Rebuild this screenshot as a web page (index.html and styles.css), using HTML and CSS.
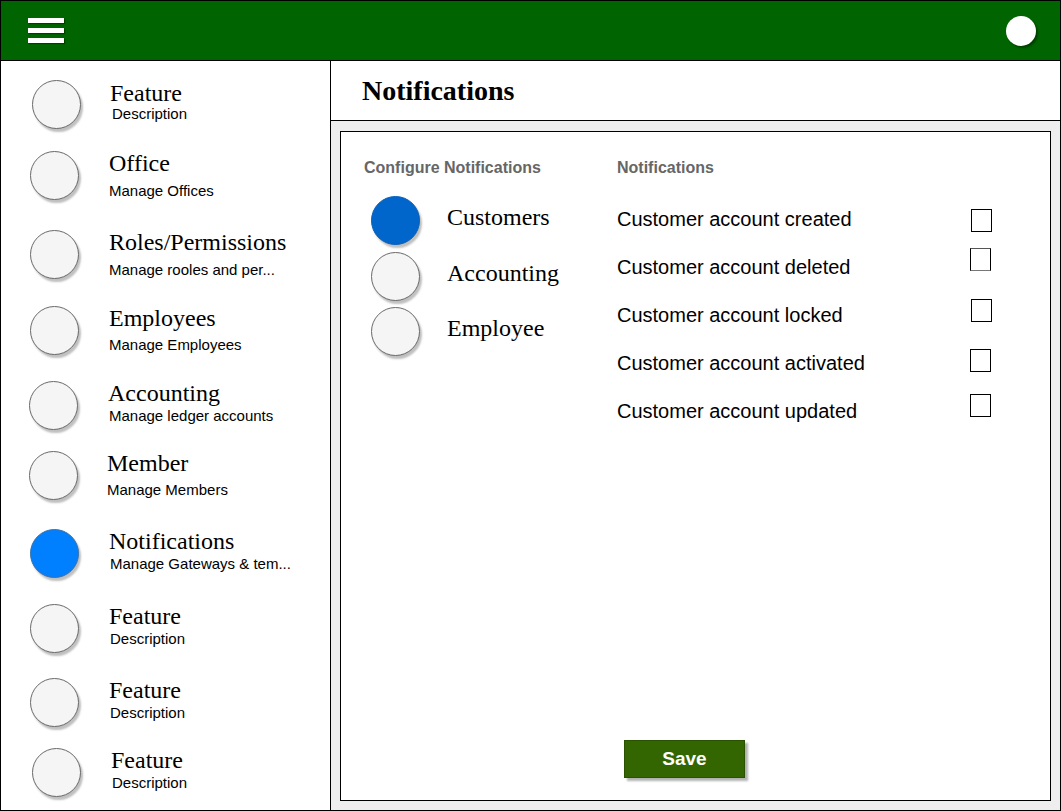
FILE: index.html
```html
<!DOCTYPE html>
<html lang="en">
<head>
<meta charset="utf-8">
<title>Notifications</title>
<link rel="stylesheet" href="styles.css">
</head>
<body>
<div class="app">
  <header class="topbar">
    <div class="hamburger"><span></span><span></span><span></span></div>
    <div class="avatar"></div>
  </header>
  <div class="body">
    <nav class="sidebar">
      <div class="nav-item"><div class="dot"></div><div class="nav-text"><div class="nav-title">Feature</div><div class="nav-desc">Description</div></div></div>
      <div class="nav-item"><div class="dot"></div><div class="nav-text"><div class="nav-title">Office</div><div class="nav-desc spaced">Manage Offices</div></div></div>
      <div class="nav-item"><div class="dot"></div><div class="nav-text"><div class="nav-title">Roles/Permissions</div><div class="nav-desc spaced">Manage rooles and per...</div></div></div>
      <div class="nav-item"><div class="dot"></div><div class="nav-text"><div class="nav-title">Employees</div><div class="nav-desc spaced-sm">Manage Employees</div></div></div>
      <div class="nav-item"><div class="dot"></div><div class="nav-text"><div class="nav-title">Accounting</div><div class="nav-desc">Manage ledger accounts</div></div></div>
      <div class="nav-item"><div class="dot"></div><div class="nav-text"><div class="nav-title">Member</div><div class="nav-desc spaced-sm">Manage Members</div></div></div>
      <div class="nav-item"><div class="dot dot-active"></div><div class="nav-text"><div class="nav-title">Notifications</div><div class="nav-desc">Manage Gateways &amp; tem...</div></div></div>
      <div class="nav-item"><div class="dot"></div><div class="nav-text"><div class="nav-title">Feature</div><div class="nav-desc">Description</div></div></div>
      <div class="nav-item"><div class="dot"></div><div class="nav-text"><div class="nav-title">Feature</div><div class="nav-desc">Description</div></div></div>
      <div class="nav-item"><div class="dot"></div><div class="nav-text"><div class="nav-title">Feature</div><div class="nav-desc">Description</div></div></div>
    </nav>
    <main class="main">
      <div class="titlebar"><h1 class="page-title">Notifications</h1></div>
      <div class="workspace">
        <section class="panel">
          <div class="columns">
            <div class="col-left">
              <div class="col-heading">Configure Notifications</div>
              <div class="cat-list">
                <div class="cat-row"><div class="dot dot-blue"></div><span class="cat-label">Customers</span></div>
                <div class="cat-row"><div class="dot"></div><span class="cat-label">Accounting</span></div>
                <div class="cat-row"><div class="dot"></div><span class="cat-label">Employee</span></div>
              </div>
            </div>
            <div class="col-right">
              <div class="col-heading">Notifications</div>
              <div class="notif-list">
                <div class="notif-row"><span>Customer account created</span><span class="check"></span></div>
                <div class="notif-row"><span>Customer account deleted</span><span class="check check-soft"></span></div>
                <div class="notif-row"><span>Customer account locked</span><span class="check"></span></div>
                <div class="notif-row"><span>Customer account activated</span><span class="check"></span></div>
                <div class="notif-row"><span>Customer account updated</span><span class="check"></span></div>
              </div>
            </div>
          </div>
          <button class="save-btn" type="button">Save</button>
        </section>
      </div>
    </main>
  </div>
</div>
</body>
</html>
```

FILE: styles.css
```css
* { box-sizing: border-box; }

html, body {
  margin: 0;
  padding: 0;
  background: #ffffff;
}

.app {
  width: 1061px;
  height: 811px;
  border: 1px solid #000;
  display: flex;
  flex-direction: column;
  font-family: "Liberation Sans", Arial, sans-serif;
  color: #000;
}

/* Top bar */
.topbar {
  height: 60px;
  flex: none;
  background: #006400;
  border-bottom: 1px solid #000;
  display: flex;
  align-items: center;
  justify-content: space-between;
  padding: 0 24px 0 27px;
}

.hamburger {
  width: 36px;
  display: flex;
  flex-direction: column;
  gap: 5px;
}

.hamburger span {
  display: block;
  height: 5px;
  background: #fff;
  box-shadow: 1px 1px 1px rgba(0, 0, 0, 0.35);
}

.avatar {
  width: 30px;
  height: 30px;
  border-radius: 50%;
  background: #fff;
  box-shadow: 2px 2px 2px rgba(0, 0, 0, 0.35);
}

/* Body */
.body {
  flex: 1;
  display: flex;
  min-height: 0;
}

.sidebar {
  width: 330px;
  flex: none;
  border-right: 1px solid #000;
  padding-top: 19px;
  display: flex;
  flex-direction: column;
}

.nav-item {
  height: 75px;
  flex: none;
  display: flex;
  align-items: flex-start;
}

.nav-item:nth-child(1) { height: 71px; }
.nav-item:nth-child(2) { height: 79px; }
.nav-item:nth-child(3) { height: 76px; }
.nav-item:nth-child(4) { height: 75px; }
.nav-item:nth-child(5) { height: 70px; }
.nav-item:nth-child(6) { height: 78px; }
.nav-item:nth-child(7) { height: 75px; }
.nav-item:nth-child(8) { height: 74px; }
.nav-item:nth-child(9) { height: 70px; }

.nav-item .dot {
  margin-left: 29px;
}

.nav-item:nth-child(1) .dot,
.nav-item:nth-child(10) .dot { margin-left: 31px; }
.nav-item:nth-child(5) .dot,
.nav-item:nth-child(6) .dot { margin-left: 28px; }

.nav-text {
  margin-left: 30px;
}

.nav-item:nth-child(1) .nav-text { margin-left: 29px; }
.nav-item:nth-child(6) .nav-text { margin-left: 29px; }

.nav-title {
  font-family: "Liberation Serif", "Times New Roman", serif;
  font-size: 24px;
  line-height: 24px;
  white-space: nowrap;
}

.nav-item:nth-child(1) .nav-title { margin-top: 1px; }

.nav-desc {
  font-size: 15px;
  line-height: 18px;
  margin-top: 2px;
  margin-left: 1px;
  white-space: nowrap;
}

.nav-desc.spaced { margin-top: 7px; margin-left: 0; }
.nav-desc.spaced-sm { margin-top: 6px; margin-left: 0; }

.nav-item:nth-child(1) .nav-desc { margin-top: 0; margin-left: 2px; }

/* circles */
.dot {
  width: 49px;
  height: 49px;
  flex: none;
  border-radius: 50%;
  background: #f5f5f5;
  border: 1px solid #6a6a6a;
  box-shadow: 2px 3px 2px rgba(0, 0, 0, 0.25);
}

.dot-active {
  background: #007fff;
  border-color: #3a6fa8;
}

.dot-blue {
  background: #0066cc;
  border-color: #0a5fb5;
}

/* Main */
.main {
  flex: 1;
  display: flex;
  flex-direction: column;
  min-width: 0;
}

.titlebar {
  height: 60px;
  flex: none;
  border-bottom: 1px solid #000;
  display: flex;
  align-items: center;
  padding-left: 31px;
}

.page-title {
  margin: 0;
  font-family: "Liberation Serif", "Times New Roman", serif;
  font-weight: bold;
  font-size: 28px;
  line-height: 32px;
}

.workspace {
  flex: 1;
  background: #eeeeee;
  padding: 10px 9px 9px 9px;
  display: flex;
}

.panel {
  flex: 1;
  background: #fff;
  border: 1px solid #000;
  padding: 26px 0 0 23px;
  display: flex;
  flex-direction: column;
}

.columns {
  display: grid;
  grid-template-columns: 253px 1fr;
}

.col-heading {
  font-size: 16px;
  line-height: 20px;
  font-weight: bold;
  color: #666666;
}

.cat-list {
  margin-top: 18px;
  display: flex;
  flex-direction: column;
}

.cat-row {
  height: 56px;
  display: flex;
  align-items: flex-start;
}

.cat-row:nth-child(2) { height: 55px; }

.cat-row .dot {
  margin-left: 7px;
}

.cat-label {
  margin-left: 27px;
  margin-top: 7px;
  font-family: "Liberation Serif", "Times New Roman", serif;
  font-size: 24px;
  line-height: 28px;
}

.notif-list {
  margin-top: 17px;
  display: flex;
  flex-direction: column;
}

.notif-row {
  height: 48px;
  display: grid;
  grid-template-columns: 353px 21px;
  align-items: center;
  font-size: 20px;
  line-height: 48px;
  white-space: nowrap;
}

.check {
  display: block;
  width: 21px;
  height: 23px;
  border: 1px solid #000;
  background: #fff;
}

.notif-row:nth-child(1) .check { margin-top: 3px; margin-left: 1px; }
.notif-row:nth-child(2) .check { margin-bottom: 16px; }
.notif-row:nth-child(3) .check { margin-bottom: 9px; margin-left: 1px; }
.notif-row:nth-child(4) .check { margin-bottom: 5px; }
.notif-row:nth-child(5) .check { margin-bottom: 11px; }

.check-soft {
  border-top-color: #555;
  border-bottom-color: #777;
}

.save-btn {
  margin-top: auto;
  margin-bottom: 22px;
  margin-left: 260px;
  width: 121px;
  height: 38px;
  background: #336600;
  border: 1px solid #2a5200;
  box-shadow: 3px 3px 2px rgba(0, 0, 0, 0.3);
  color: #fff;
  font-family: "Liberation Sans", Arial, sans-serif;
  font-weight: bold;
  font-size: 19px;
  padding: 0;
  cursor: pointer;
}
```
